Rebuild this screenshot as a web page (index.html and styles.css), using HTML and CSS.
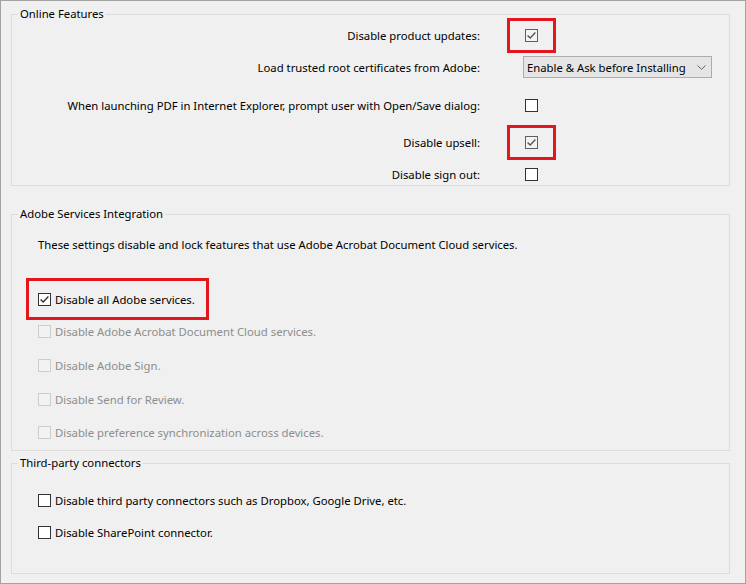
FILE: index.html
```html
<!DOCTYPE html>
<html lang="en">
<head>
    <meta charset="UTF-8">
    <meta name="viewport" content="width=device-width, initial-scale=1.0">
    <title>Preferences - Online Features</title>
    <link rel="stylesheet" href="styles.css">
</head>
<body>
    <div class="frame">
        <fieldset class="group online">
            <legend class="group-title">Online Features</legend>
            <div class="opt-row r1">
                <span class="opt-label">Disable product updates:</span>
                <span class="box checked soft marked"><svg viewBox="0 0 11 11"><path d="M1.6 5.4 L4.2 8 L9.4 2.6"/></svg></span>
            </div>
            <div class="opt-row r2">
                <span class="opt-label">Load trusted root certificates from Adobe:</span>
                <div class="select">
                    <span>Enable &amp; Ask before Installing</span>
                    <svg class="chevron" viewBox="0 0 9 5"><path d="M0.5 0.5 L4.5 4.3 L8.5 0.5"/></svg>
                </div>
            </div>
            <div class="opt-row r3">
                <span class="opt-label">When launching PDF in Internet Explorer, prompt user with Open/Save dialog:</span>
                <span class="box"></span>
            </div>
            <div class="opt-row r4">
                <span class="opt-label">Disable upsell:</span>
                <span class="box checked soft marked"><svg viewBox="0 0 11 11"><path d="M1.6 5.4 L4.2 8 L9.4 2.6"/></svg></span>
            </div>
            <div class="opt-row r5">
                <span class="opt-label">Disable sign out:</span>
                <span class="box"></span>
            </div>
        </fieldset>

        <fieldset class="group services">
            <legend class="group-title">Adobe Services Integration</legend>
            <div class="group-body">
                <p class="note">These settings disable and lock features that use Adobe Acrobat Document Cloud services.</p>
                <div class="check-row s1 marked-row">
                    <span class="box checked"><svg viewBox="0 0 11 11"><path d="M1.6 5.4 L4.2 8 L9.4 2.6"/></svg></span>
                    <span>Disable all Adobe services.</span>
                </div>
                <div class="check-row s2 disabled">
                    <span class="box"></span>
                    <span>Disable Adobe Acrobat Document Cloud services.</span>
                </div>
                <div class="check-row s3 disabled">
                    <span class="box"></span>
                    <span>Disable Adobe Sign.</span>
                </div>
                <div class="check-row s3 disabled">
                    <span class="box"></span>
                    <span>Disable Send for Review.</span>
                </div>
                <div class="check-row s5 disabled">
                    <span class="box"></span>
                    <span>Disable preference synchronization across devices.</span>
                </div>
            </div>
        </fieldset>

        <fieldset class="group connectors">
            <legend class="group-title">Third-party connectors</legend>
            <div class="group-body">
                <div class="check-row c1">
                    <span class="box"></span>
                    <span>Disable third party connectors such as Dropbox, Google Drive, etc.</span>
                </div>
                <div class="check-row c2">
                    <span class="box"></span>
                    <span>Disable SharePoint connector.</span>
                </div>
            </div>
        </fieldset>
    </div>
</body>
</html>
```

FILE: styles.css
```css
body {
    margin: 0;
    padding: 0;
    font-family: "Noto Sans", "Open Sans", sans-serif;
    font-size: 11.3px;
    color: #000;
    background-color: #f0f0f0;
}
.frame {
    width: 746px;
    height: 584px;
    box-sizing: border-box;
    border: 1px solid #a3a3a3;
    background-color: #f0f0f0;
    padding: 5px 15px 0 10px;
}
.group {
    margin: 0;
    padding: 0;
    border: 1px solid #dcdcdc;
    min-width: 0;
}
.group-title {
    margin-left: 6px;
    padding: 0 2px;
    line-height: 16px;
}
.group-body {
    padding-left: 26px;
}
.online {
    padding-top: 2px;
}
.services {
    margin-top: 20px;
    padding: 15px 0 7px 0;
}
.connectors {
    margin-top: 4px;
    padding: 18px 0 30px 0;
}

/* label : control rows */
.opt-row {
    display: grid;
    grid-template-columns: 468px 1fr;
    column-gap: 43px;
    align-items: center;
    height: 22px;
}
.opt-row.r2 { margin-top: 10px; }
.opt-row.r3 { margin-top: 16px; }
.opt-row.r4 { margin-top: 15px; }
.opt-row.r5 { margin-top: 10px; }
.opt-label {
    text-align: right;
    white-space: nowrap;
}
.opt-row .box {
    margin-left: 2px;
}

/* checkboxes */
.box {
    position: relative;
    display: inline-flex;
    align-items: center;
    justify-content: center;
    width: 13px;
    height: 13px;
    box-sizing: border-box;
    border: 1px solid #333;
    background-color: #fff;
    flex-shrink: 0;
}
.box svg {
    width: 11px;
    height: 11px;
}
.box svg path {
    fill: none;
    stroke: #333;
    stroke-width: 1.4;
}
.box.soft {
    border-color: #5f5f5f;
    background-color: #f3f3f3;
}
.box.soft svg path {
    stroke: #555;
}
.box.marked::after {
    content: "";
    position: absolute;
    top: -12px;
    bottom: -12px;
    left: -19px;
    right: -19px;
    border: 3px solid #e5161b;
}

/* select */
.select {
    display: flex;
    align-items: center;
    justify-content: space-between;
    width: 189px;
    height: 22px;
    box-sizing: border-box;
    border: 1px solid #adadad;
    background-color: #e5e5e5;
    padding: 0 5px 0 3px;
}
.chevron {
    width: 9px;
    height: 5px;
}
.chevron path {
    fill: none;
    stroke: #606060;
    stroke-width: 1;
}

/* services / connectors */
.note {
    margin: 0;
    line-height: 16px;
}
.check-row {
    display: flex;
    align-items: center;
    gap: 4px;
    height: 22px;
}
.check-row.s1 { margin-top: 35px; }
.check-row.s2 { margin-top: 10px; }
.check-row.s3 { margin-top: 12px; }
.check-row.s5 { margin-top: 11px; }
.check-row.c2 { margin-top: 10px; }
.check-row.disabled {
    color: #8d8d8d;
}
.check-row.disabled .box {
    border-color: #cdcdcd;
    background-color: #f2f2f2;
}
.marked-row {
    position: relative;
    width: max-content;
}
.marked-row::after {
    content: "";
    position: absolute;
    top: -10px;
    bottom: -10px;
    left: -12px;
    right: -14px;
    border: 3px solid #e5161b;
}
```
